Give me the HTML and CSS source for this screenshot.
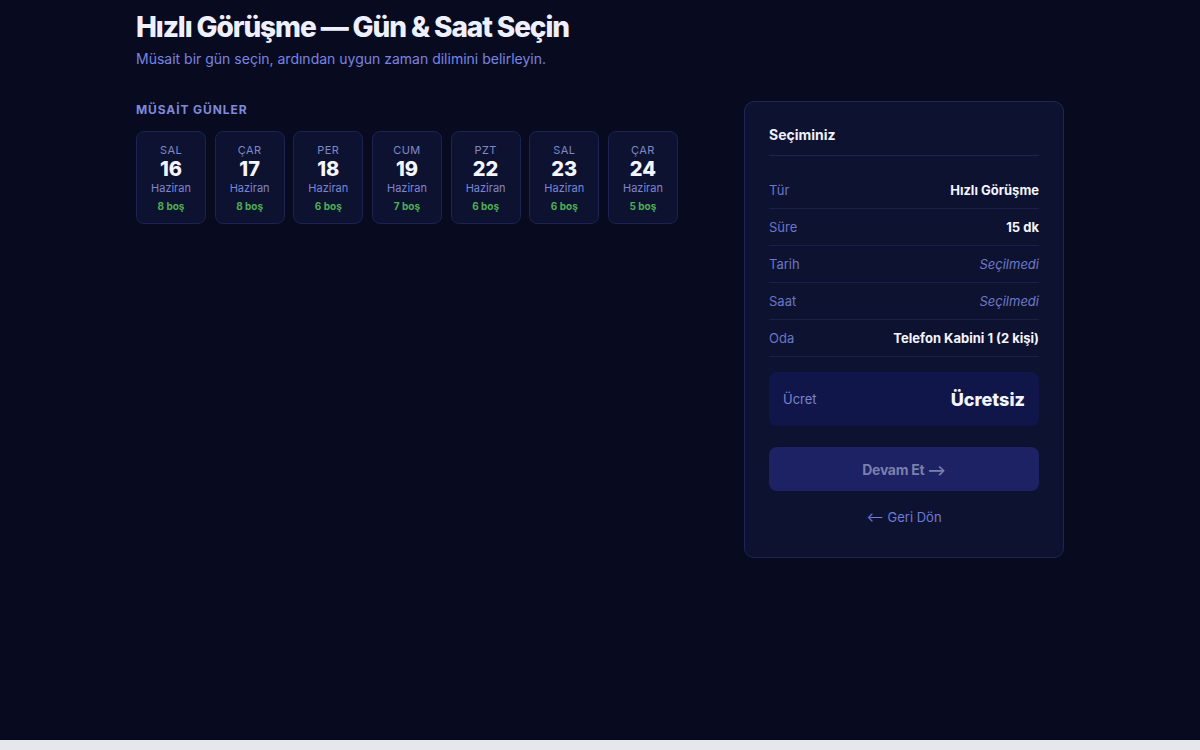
FILE: index.html
```html
<!DOCTYPE html>
<html lang="tr">
<head>
    <meta charset="UTF-8">
    <meta name="viewport" content="width=device-width, initial-scale=1.0">
    <title>Hızlı Görüşme — Gün &amp; Saat Seçin</title>
    <link rel="stylesheet" href="styles.css">
</head>
<body>

    <div class="page">
        <div class="container">
            <h1>Hızlı Görüşme — Gün &amp; Saat Seçin</h1>
            <p class="subtitle">Müsait bir gün seçin, ardından uygun zaman dilimini belirleyin.</p>

            <div class="layout">
                <!-- Days -->
                <div class="days-col">
                    <h4 class="section-label">MÜSAİT GÜNLER</h4>
                    <div class="days">
                        <div class="day"><span class="dname">SAL</span><span class="dnum">16</span><span class="dmonth">Haziran</span><span class="dfree">8 boş</span></div>
                        <div class="day"><span class="dname">ÇAR</span><span class="dnum">17</span><span class="dmonth">Haziran</span><span class="dfree">8 boş</span></div>
                        <div class="day"><span class="dname">PER</span><span class="dnum">18</span><span class="dmonth">Haziran</span><span class="dfree">6 boş</span></div>
                        <div class="day"><span class="dname">CUM</span><span class="dnum">19</span><span class="dmonth">Haziran</span><span class="dfree">7 boş</span></div>
                        <div class="day"><span class="dname">PZT</span><span class="dnum">22</span><span class="dmonth">Haziran</span><span class="dfree">6 boş</span></div>
                        <div class="day"><span class="dname">SAL</span><span class="dnum">23</span><span class="dmonth">Haziran</span><span class="dfree">6 boş</span></div>
                        <div class="day"><span class="dname">ÇAR</span><span class="dnum">24</span><span class="dmonth">Haziran</span><span class="dfree">5 boş</span></div>
                    </div>
                </div>

                <!-- Summary -->
                <aside class="summary">
                    <h3>Seçiminiz</h3>
                    <div class="row"><span class="label">Tür</span><span class="value">Hızlı Görüşme</span></div>
                    <div class="row"><span class="label">Süre</span><span class="value">15 dk</span></div>
                    <div class="row"><span class="label">Tarih</span><span class="value empty">Seçilmedi</span></div>
                    <div class="row"><span class="label">Saat</span><span class="value empty">Seçilmedi</span></div>
                    <div class="row"><span class="label">Oda</span><span class="value">Telefon Kabini 1 (2 kişi)</span></div>

                    <div class="price">
                        <span class="price-label">Ücret</span>
                        <span class="price-value">Ücretsiz</span>
                    </div>

                    <button class="next" disabled>Devam Et ⟶</button>
                    <a class="back" href="#">⟵ Geri Dön</a>
                </aside>
            </div>
        </div>
    </div>

</body>
</html>
```

FILE: styles.css
```css
/* Basic Styling */
body {
    margin: 0;
    background: #e5e7eb;
    font-family: Inter, "Noto Sans", sans-serif;
}
.page {
    background: #080b20;
    height: 740px;
}
.container {
    width: 928px;
    margin: 0 auto;
    padding-top: 10px;
}
h1 {
    margin: 0;
    font-size: 28px;
    font-weight: 800;
    letter-spacing: -1.1px;
    color: #eef0ff;
    line-height: 34px;
}
.subtitle {
    margin: 6px 0 0;
    font-size: 14px;
    color: #7a84e0;
}
.layout {
    display: grid;
    grid-template-columns: 1fr 320px;
    gap: 66px;
    margin-top: 35px;
    align-items: start;
}
.section-label {
    margin: 0 0 14px;
    font-size: 12px;
    font-weight: 700;
    letter-spacing: 0.9px;
    color: #7f89dc;
}
.days {
    display: flex;
    gap: 8.67px;
}
.day {
    width: 70px;
    height: 93px;
    box-sizing: border-box;
    display: flex;
    flex-direction: column;
    align-items: center;
    padding-top: 11px;
    background: #0d1230;
    border: 1px solid #1c2252;
    border-radius: 8px;
}
.dname {
    font-size: 11px;
    line-height: 14px;
    letter-spacing: 0.4px;
    color: #8088c8;
}
.dnum {
    font-size: 20px;
    font-weight: 800;
    line-height: 25px;
    color: #f4f5ff;
}
.dmonth {
    font-size: 11px;
    line-height: 12px;
    color: #7c86d2;
}
.dfree {
    margin-top: 6px;
    font-size: 10px;
    font-weight: 700;
    color: #4cb050;
}
.summary {
    background: #0d1230;
    border: 1px solid #1f2554;
    border-radius: 10px;
    padding: 24px 24px 32px;
    margin-top: -1px;
}
.summary h3 {
    margin: 0;
    padding-bottom: 12px;
    font-size: 14px;
    font-weight: 700;
    color: #eef0ff;
    border-bottom: 1px solid #1e2450;
    margin-bottom: 16px;
}
.row {
    display: flex;
    justify-content: space-between;
    align-items: center;
    height: 36px;
    border-bottom: 1px solid #1a2048;
    font-size: 13px;
}
.label {
    color: #6b76c8;
}
.value {
    font-weight: 700;
    color: #f4f5ff;
}
.value.empty {
    font-weight: 400;
    font-style: italic;
    color: #6e78c8;
}
.price {
    display: flex;
    justify-content: space-between;
    align-items: center;
    margin-top: 15px;
    height: 54px;
    padding: 0 14px;
    background: #11164a;
    border-radius: 8px;
}
.price-label {
    font-size: 13px;
    color: #7a84cc;
}
.price-value {
    font-size: 18px;
    font-weight: 800;
    color: #f4f5ff;
}
.next {
    display: block;
    width: 100%;
    height: 44px;
    margin-top: 21px;
    border: 0;
    border-radius: 8px;
    background: #1c2264;
    color: #7a80ac;
    font-family: inherit;
    font-size: 14px;
    font-weight: 700;
    letter-spacing: -0.3px;
}
.back {
    display: block;
    margin-top: 18px;
    text-align: center;
    font-size: 13px;
    color: #6f7bd6;
    text-decoration: none;
}
```
